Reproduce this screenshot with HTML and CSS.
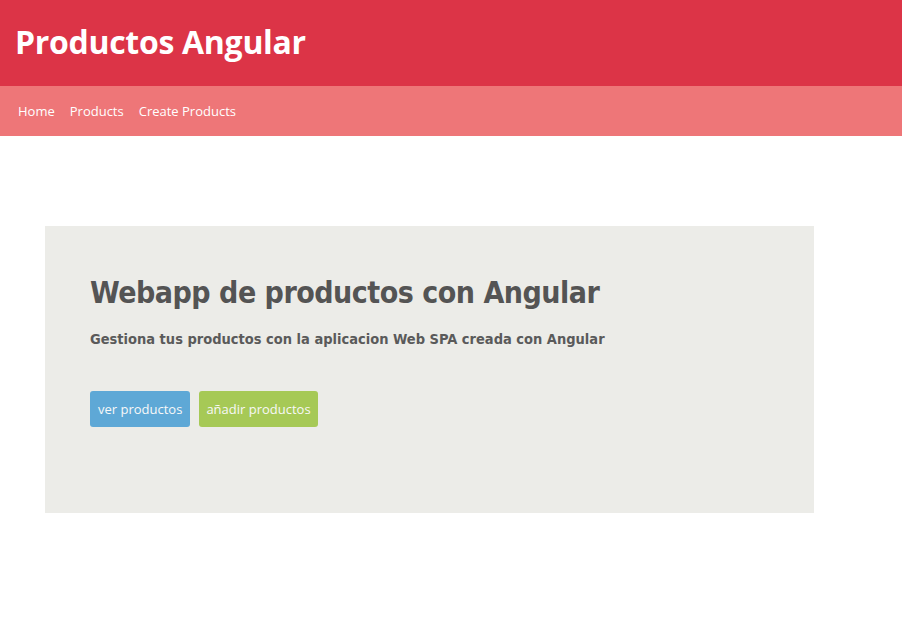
FILE: index.html
```html
<!DOCTYPE html>
<html lang="es">
<head>
<meta charset="utf-8">
<title>Productos Angular</title>
<link rel="stylesheet" href="styles.css">
</head>
<body>
<header class="top">
  <h1 class="brand">Productos Angular</h1>
</header>
<nav class="nav">
  <a href="#">Home</a>
  <a href="#">Products</a>
  <a href="#">Create Products</a>
</nav>
<main class="main">
  <section class="jumbo">
    <h2 class="jumbo-title">Webapp de productos con Angular</h2>
    <p class="jumbo-sub">Gestiona tus productos con la aplicacion Web SPA creada con Angular</p>
    <div class="actions">
      <a class="btn btn-blue" href="#">ver productos</a>
      <a class="btn btn-green" href="#">añadir productos</a>
    </div>
  </section>
</main>
</body>
</html>
```
FILE: styles.css
```css
* { box-sizing: border-box; }
html, body { margin: 0; padding: 0; background: #fff; }
body { font-family: "Open Sans", "Noto Sans", sans-serif; }
.top {
  background: #dc3447;
  height: 86px;
  display: flex;
  align-items: center;
  padding: 0 15px 4px;
}
.brand {
  margin: 0;
  color: #fff;
  font-size: 32px;
  font-weight: 700;
  letter-spacing: -0.3px;
}
.nav {
  background: #ee7678;
  height: 50px;
  display: flex;
  align-items: center;
  gap: 15px;
  padding: 0 18px;
}
.nav a {
  color: #fff;
  text-decoration: none;
  font-size: 13px;
}
.main { padding: 90px 88px 0 45px; }
.jumbo {
  background: #ecece8;
  height: 287px;
  padding: 47px 45px 0;
  color: #545454;
  font-family: "DejaVu Sans Condensed", "DejaVu Sans", sans-serif;
}
.jumbo-title {
  margin: 0;
  font-size: 30px;
  font-weight: 700;
  letter-spacing: -0.5px;
  line-height: 40px;
}
.jumbo-sub {
  margin: 16px 0 0;
  font-size: 14.5px;
  font-weight: 700;
  line-height: 20px;
  color: #5a5a5a;
}
.actions {
  display: flex;
  gap: 9px;
  margin-top: 42px;
}
.btn {
  height: 36px;
  display: flex;
  align-items: center;
  padding: 0 8px;
  border-radius: 3px;
  color: #f8f8f8;
  text-decoration: none;
  font-family: "Open Sans", "Noto Sans", sans-serif;
  font-size: 13px;
}
.btn-blue { background: #5ea8d6; }
.btn-green { background: #a6c956; padding: 0 7px; }
```
